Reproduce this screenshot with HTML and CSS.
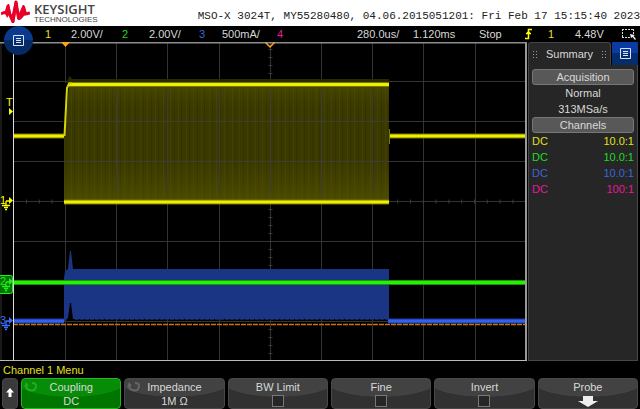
FILE: index.html
```html
<!DOCTYPE html>
<html lang="en">
<head>
   <meta charset="utf-8">
   <title>Keysight MSO-X 3024T</title>
   <link rel="stylesheet" href="styles.css">
</head>
<body>
   <header class="banner">
      <svg class="logo" width="29" height="24" viewBox="0 0 29 24">
         <path d="M0 14L3 12.500L5 13L7 6L9 15L12 21.500L15 2L17.500 18L20 17L22.500 7L24.500 14L29 13" fill="none" stroke="#e90029" stroke-width="3" stroke-linejoin="round"/>
         <path d="M4 13L7 4H8L10 14L11 14L14 1H16L18 13L22 5H23L26 14L23 16L19 20H17L15 12L13 23H11L8 15L6 18Z" fill="#e90029"/>
      </svg>
      <div class="brand">
         <span class="brand-name">KEYSIGHT</span>
         <span class="brand-sub">TECHNOLOGIES</span>
      </div>
      <div class="ident">MSO-X 3024T, MY55280480, 04.06.2015051201: Fri Feb 17 15:15:40 2023</div>
   </header>

   <button class="main-menu" type="button" aria-label="Main menu">
      <svg width="13" height="13" viewBox="0 0 13 13">
         <path d="M1.500 1.500H11.500V11.500H1.500Z M4 4.500H9 M4 6.500H9 M4 8.500H9" fill="none" stroke="#d4e4f4"/>
      </svg>
   </button>

   <div class="status">
      <span class="ch1">1</span><span>2.00V/</span>
      <span class="ch2">2</span><span>2.00V/</span>
      <span class="ch3">3</span><span>500mA/</span>
      <span class="ch4">4</span>
      <span>280.0us/</span><span>1.120ms</span><span>Stop</span>
      <svg width="8" height="12" viewBox="0 0 8 12">
         <path d="M0 10.500H3.500V1.500H7 M1 5.500H6 M2 4.500H5" fill="none" stroke="#ff0" stroke-width="1.500"/>
      </svg>
      <span class="ch1">1</span><span>4.48V</span>
      <svg width="16" height="14" viewBox="0 0 16 14">
         <path d="M1 2.500H13 M1 10.500H10 M1.500 2V11 M12.500 2V8" fill="none" stroke="#ddd" stroke-dasharray="2 1"/>
         <path d="M9 7L14 8L12.500 9L15 12L14 13L11.500 10L10 11Z" fill="#eee"/>
      </svg>
   </div>

   <main class="scope">
      <svg class="plot" viewBox="0 0 527 320">
         <defs>
            <pattern id="stripes" width="23" height="118" patternUnits="userSpaceOnUse">
               <rect width="23" height="118" fill="#3a3900"/>
               <path d="M2.500 0V118M9.500 0V118M17.500 0V118" stroke="#434100"/>
               <path d="M5.500 0V118M13.500 0V118M20.500 0V118" stroke="#333200"/>
            </pattern>
            <linearGradient id="glow" x2="0" y2="1">
               <stop offset="0" stop-color="#555500" stop-opacity=".5"/>
               <stop offset=".2" stop-color="#555500" stop-opacity="0"/>
               <stop offset=".65" stop-color="#555500" stop-opacity="0"/>
               <stop offset="1" stop-color="#5a5a00" stop-opacity=".6"/>
            </linearGradient>
            <path id="ground" d="M-7 0H-3 M-7 0V4 M-11 4.500H-3 M-9 6.500H-5 M-8 8.500H-6" fill="none" stroke-width="1.300"/>
         </defs>

         <!-- graticule -->
         <path class="grid" d="M1 1V319 M65.500 1V319 M116.500 1V319 M167.500 1V319 M219.500 1V319 M270.500 1V319 M321.500 1V319 M372.500 1V319 M423.500 1V319 M475.500 1V319 M13 39.500H526 M13 79.500H526 M13 119.500H526 M13 159.500H526 M13 199.500H526 M13 239.500H526 M13 279.500H526"/>
         <path class="ticks" d="M26 159.500H526"/>
         <path class="ticks-v" d="M270.500 7V319"/>

         <!-- channel 1 -->
         <path d="M66 42L68 37L70 34L72 37H389V42Z" fill="#292900"/>
         <rect x="64" y="42" width="325" height="118" fill="url(#stripes)"/>
         <rect x="64" y="42" width="325" height="118" fill="url(#glow)"/>
         <path d="M64 79.500H389 M64 119.500H389 M116.500 47V153 M167.500 47V153 M219.500 47V153 M270.500 47V153 M321.500 47V153 M372.500 47V153" stroke="#3c3c38"/>
         <path d="M63 41H69L65 94H63Z" fill="#000"/>
         <path class="t1-edge" d="M13 94H64 M389 94H526 M69 42.500H389 M64 160H389"/>
         <path class="t1" d="M13 94H64 M389 94H526 M69 42.500H389 M64 160H389"/>
         <path d="M64.500 94L67 46L69 41.500H72" fill="none" stroke="#d6d600" stroke-width="2"/>
         <path d="M389.500 87V102" stroke="#777700"/>

         <!-- channel 3 -->
         <path d="M64 236L65 229L68 227L70 209H71L73 227H389V277H73L71 261H70L68 276L64 280Z" fill="#1b3585"/>
         <path d="M75 277.500H389" stroke="#152453" stroke-dasharray="4 1"/>
         <path class="t3-edge" d="M13 279H64 M388 279H526"/>
         <path class="t3" d="M13 279H64 M388 279H526"/>
         <path d="M13 282.500H526" stroke="#c8730c" stroke-width="1.500" stroke-dasharray="5 1"/>

         <!-- channel 2 -->
         <path class="t2-edge" d="M13 240.500H526"/>
         <path class="t2" d="M13 240.500H526"/>

         <!-- frame -->
         <path d="M0 .5H527" stroke="#8d8d8d" stroke-width="2"/>
         <path d="M13.500 1V319" stroke="#ddd"/>
         <path d="M526 1V319" stroke="#999" stroke-width="2"/>
         <path d="M0 318.500H527" stroke="#bbb"/>
         <path d="M61 0H70L65.500 5Z" fill="#ffa31a"/>
         <path d="M265.500 .5L270 5L274.500 .5" fill="none" stroke="#ffa31a" stroke-width="1.500"/>

         <!-- level and ground markers -->
         <text class="mark" x="6" y="64" fill="#ff0">T</text>
         <path d="M9 66L13 69.500L9 73Z" fill="#ff0"/>
         <text class="mark" x="0" y="162" fill="#ff0">1</text>
         <path d="M9 155L13 158.500L9 162Z" fill="#ff0"/>
         <use href="#ground" x="13" y="159" stroke="#ff0"/>
         <rect x="-4" y="233.500" width="16.500" height="18" rx="2" fill="#007300" stroke="#20ed20"/>
         <text class="mark" x="0" y="243" fill="#20ed20">2</text>
         <path d="M9 236L13 239.500L9 243Z" fill="#20ed20"/>
         <use href="#ground" x="13" y="240" stroke="#20ed20"/>
         <text class="mark" x="0" y="282" fill="#3c6eff">3</text>
         <path d="M9 275L13 278.500L9 282Z" fill="#3c6eff"/>
         <use href="#ground" x="13" y="279" stroke="#3c6eff"/>
      </svg>

      <aside class="side">
         <div class="side-tabs">
            <div class="tab">
               <span class="grip"></span>Summary<span class="grip"></span>
            </div>
            <button class="tab-menu" type="button" aria-label="Side bar menu">
               <svg width="13" height="13" viewBox="0 0 13 13">
                  <path d="M1.500 1.500H11.500V11.500H1.500Z M4 4.500H9 M4 6.500H9 M4 8.500H9" fill="none" stroke="#d4e4f4"/>
               </svg>
            </button>
         </div>
         <div class="side-body">
            <h2>Acquisition</h2>
            <p>Normal</p>
            <p>313MSa/s</p>
            <h2>Channels</h2>
            <table class="channels">
               <tr class="ch1"><td>DC</td><td>10.0:1</td></tr>
               <tr class="ch2"><td>DC</td><td>10.0:1</td></tr>
               <tr class="ch3"><td>DC</td><td>10.0:1</td></tr>
               <tr class="ch4"><td>DC</td><td>100:1</td></tr>
            </table>
         </div>
      </aside>
   </main>

   <div class="menu-title">Channel 1 Menu</div>
   <nav class="softkeys">
      <button class="key back" type="button" aria-label="Back">
         <svg width="8" height="9" viewBox="0 0 8 9"><path d="M4 0L8 4.500H5.500V9H2.500V4.500H0Z" fill="#fff"/></svg>
      </button>
      <button class="key active" type="button">
         <svg class="knob" width="15" height="12" viewBox="0 0 15 12">
            <path d="M2 4Q2 9 7 9.500Q12 9.500 12 5Q12 2 8 2" fill="none" stroke="#1fae1f" stroke-width="2"/><path d="M0 6L2 1L5 5Z" fill="#1fae1f"/>
         </svg>
         <span>Coupling</span><span>DC</span>
      </button>
      <button class="key" type="button">
         <svg class="knob" width="15" height="12" viewBox="0 0 15 12">
            <path d="M2 4Q2 9 7 9.500Q12 9.500 12 5Q12 2 8 2" fill="none" stroke="#666" stroke-width="2"/><path d="M0 6L2 1L5 5Z" fill="#666"/>
         </svg>
         <span>Impedance</span><span>1M Ω</span>
      </button>
      <label class="key"><span>BW Limit</span><input type="checkbox"></label>
      <label class="key"><span>Fine</span><input type="checkbox"></label>
      <label class="key"><span>Invert</span><input type="checkbox"></label>
      <button class="key" type="button">
         <span>Probe</span>
         <svg class="down" width="20" height="11" viewBox="0 0 20 11"><path d="M5 0H15V5H20L10 11L0 5H5Z" fill="#eee"/></svg>
      </button>
   </nav>
</body>
</html>
```

FILE: styles.css
```css
* { box-sizing: border-box; }
body
{
   margin: 0;
   background: #000;
   color: #d8d8d8;
   font: 11px/16px "Liberation Sans", Arial, sans-serif;
   position: relative;
   overflow-x: hidden;
}
button { font: inherit; color: inherit; border: 0; padding: 0; }
svg { display: block; }

.ch1 { color: #e0e020; }
.ch2 { color: #20dc20; }
.ch3 { color: #3c64dc; }
.ch4 { color: #e8189c; }

.banner
{
   display: flex;
   height: 26px;
   background: #fff;
   color: #222;
}
.logo { margin-left: 1px; }
.brand
{
   display: flex;
   flex-direction: column;
   margin-left: 4px;
   color: #444;
   font-family: "Liberation Sans", sans-serif;
}
.brand-name { font-size: 13px; line-height: 18px; height: 15px; font-weight: 600; font-family: "Open Sans", sans-serif; }
.brand-sub { font-size: 8px; line-height: 9px; }
.ident
{
   margin-left: auto;
   padding-top: 8px;
   font: 11px/16px "Liberation Mono", monospace;
   white-space: pre;
}

.main-menu
{
   position: absolute;
   left: 4px;
   top: 26px;
   z-index: 2;
   width: 29px;
   height: 29px;
   border-radius: 50%;
   background: linear-gradient(#0b3a8c 50%, #062a63 50%);
   display: grid;
   place-items: center;
}
.status
{
   display: grid;
   grid-template-columns: 26fr 51fr 27fr 50fr 23fr 55fr 80fr 56fr 66fr 46fr 23fr 27fr 46fr 19fr;
   align-items: center;
   height: 16px;
   padding-left: 45px;
   white-space: nowrap;
}
.status span { min-width: 0; }

.scope { display: flex; align-items: stretch; }
.plot { flex: 1; min-width: 0; overflow: hidden; }
.grid { stroke: #333; fill: none; }
.ticks { stroke: #3a3a3a; stroke-width: 4; stroke-dasharray: 1 11.800; }
.ticks-v { stroke: #3a3a3a; stroke-width: 4; stroke-dasharray: 1 7; }
.t1-edge { stroke: #777700; stroke-width: 5; }
.t1 { stroke: #eeee00; stroke-width: 3; }
.t2-edge { stroke: #129612; stroke-width: 5; }
.t2 { stroke: #28f000; stroke-width: 3; }
.t3-edge { stroke: #1c3c9c; stroke-width: 5; }
.t3 { stroke: #2f60f0; stroke-width: 3; }
.mark { font: 11px "Liberation Sans", sans-serif; }

.side
{
   display: flex;
   flex-direction: column;
   width: 113px;
   padding: 0 2px 1px 1px;
}
.side-tabs { display: flex; height: 23px; }
.tab
{
   flex: 1;
   display: flex;
   align-items: center;
   justify-content: space-between;
   padding: 0 3px;
   background: #262626;
   border: 1px solid #444;
   border-bottom: 0;
   border-radius: 3px 3px 0 0;
}
.grip
{
   width: 6px;
   height: 9px;
   background: radial-gradient(circle, #999 1px, transparent 1px) 0 0 / 3px 3px;
}
.tab-menu
{
   width: 26px;
   margin-left: 1px;
   background: linear-gradient(#0a3ba5 50%, #062d6b 50%);
   display: grid;
   place-items: center;
}
.side-body
{
   flex: 1;
   padding: 4px 3px;
   background: #262626;
   border: 1px solid #484848;
   border-top: 0;
}
.side h2
{
   margin: 0;
   height: 16px;
   font: inherit;
   text-align: center;
   background: #585858;
   border: 1px solid #777;
   border-radius: 3px;
   line-height: 14px;
}
.side p { margin: 0; text-align: center; }
.channels { width: 100%; border-collapse: collapse; }
.channels td { padding: 0; }
.channels td + td { text-align: right; }

.menu-title { padding: 0 3px; color: #e0e020; }
.softkeys { display: flex; gap: 3px; padding: 0 2px; }
.key
{
   position: relative;
   flex: 1;
   display: flex;
   flex-direction: column;
   align-items: center;
   height: 31px;
   padding-top: 1px;
   line-height: 14px;
   border: 1px solid #484848;
   border-radius: 4px;
   background: radial-gradient(ellipse 60% 18px at 50% 0, #424242 97%, #313131 100%);
}
.key.active
{
   border-color: #25b525;
   background: radial-gradient(ellipse 60% 18px at 50% 0, #078c07 97%, #007600 100%);
}
.key.back { flex: 0 0 16px; padding-top: 9px; background: #3a3a3a; }
.knob { position: absolute; left: 2px; top: 2px; }
.key input
{
   appearance: none;
   width: 12px;
   height: 12px;
   margin: 1px 0 0;
   border: 1px solid #777;
   background: #262626;
}
.down { margin-top: 2px; }
```
